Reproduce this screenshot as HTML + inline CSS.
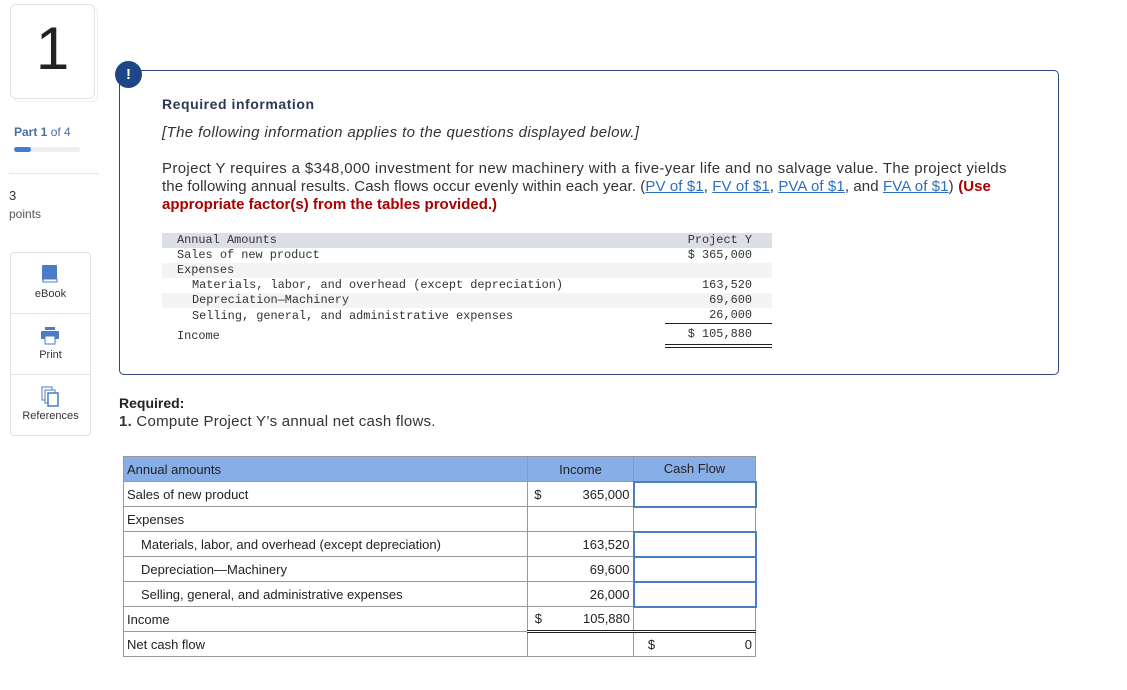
<!DOCTYPE html>
<html><head><meta charset="utf-8"><style>
*{margin:0;padding:0;box-sizing:border-box}
body{width:1127px;height:690px;background:#fff;font-family:"Liberation Sans",sans-serif;color:#333;position:relative;overflow:hidden}
.a{position:absolute;white-space:nowrap}
.card{position:absolute;left:10px;top:4px;width:85px;height:95px;border:1px solid #e2e2e2;border-radius:6px;background:#fff}
.mono{font-family:"Liberation Mono",monospace;font-size:11.9px;color:#333}
.it{position:absolute;left:162px;width:610px;height:15px}
a{color:#2c6ebf;text-decoration:underline}
table{border-collapse:collapse;position:absolute;left:123px;top:456px;font-family:"Liberation Sans Narrow","Liberation Sans",sans-serif;font-size:13px;color:#222}
td{border:1px solid #999;height:25px;padding:0 3px;vertical-align:middle}
.in{border:2px solid #4a7fc0}
</style></head><body>
<div class="card" style="left:13px;top:7px;border-color:#eee"></div>
<div class="card"></div>
<div class="a" style="left:10px;top:14px;width:85px;text-align:center;font-size:60px;color:#222;line-height:70px">1</div>
<div class="a" style="left:14px;top:125px;font-size:12px;color:#4a6fa5"><b>Part 1</b> of 4</div>
<div class="a" style="left:14px;top:147px;width:66px;height:5px;background:#eee;border-radius:3px"></div>
<div class="a" style="left:14px;top:147px;width:17px;height:5px;background:#3f7fd1;border-radius:3px"></div>
<div class="a" style="left:9px;top:173px;width:90px;height:1px;background:#e6e6e6"></div>
<div class="a" style="left:9px;top:188px;font-size:13px;color:#333">3</div>
<div class="a" style="left:9px;top:207px;font-size:12px;color:#555">points</div>
<div class="a" style="left:10px;top:252px;width:81px;height:184px;border:1px solid #e2e2e2;border-radius:4px"></div>
<div class="a" style="left:10px;top:313px;width:81px;height:1px;background:#e2e2e2"></div>
<div class="a" style="left:10px;top:374px;width:81px;height:1px;background:#e2e2e2"></div>
<svg class="a" style="left:40px;top:264px" width="20" height="20"><rect x="2" y="1" width="15" height="16" rx="1" fill="#4a7cc7"/><rect x="3" y="15" width="14" height="3" fill="#fff" stroke="#4a7cc7"/></svg>
<div class="a" style="left:10px;top:288px;width:81px;text-align:center;font-size:11px">eBook</div>
<svg class="a" style="left:40px;top:326px" width="20" height="20"><rect x="5" y="1" width="10" height="3" fill="#4a7cc7"/><rect x="1" y="5" width="18" height="8" rx="1" fill="#4a7cc7"/><rect x="5" y="10" width="10" height="8" fill="#fff" stroke="#4a7cc7"/></svg>
<div class="a" style="left:10px;top:349px;width:81px;text-align:center;font-size:11px">Print</div>
<svg class="a" style="left:40px;top:386px" width="20" height="22"><rect x="2" y="1" width="10" height="13" fill="#fff" stroke="#4a7cc7"/><rect x="5" y="4" width="10" height="13" fill="#fff" stroke="#4a7cc7"/><rect x="8" y="7" width="10" height="13" fill="#fff" stroke="#4a7cc7" stroke-width="1.5"/></svg>
<div class="a" style="left:10px;top:410px;width:81px;text-align:center;font-size:11px">References</div>

<div class="a" style="left:119px;top:70px;width:940px;height:305px;border:1px solid #2c4a7a;border-radius:5px"></div>
<div class="a" style="left:115px;top:61px;width:27px;height:27px;border-radius:50%;background:#1f4587;color:#fff;text-align:center;font-weight:bold;font-size:15px;line-height:27px">!</div>
<div class="a" style="left:162px;top:96px;font-size:14px;font-weight:bold;color:#2b3a55;letter-spacing:0.55px">Required information</div>
<div class="a" style="left:162px;top:124px;font-size:15px;font-style:italic;color:#333;letter-spacing:0.38px">[The following information applies to the questions displayed below.]</div>
<div class="a" style="left:162px;top:160px;font-size:15px;line-height:18px;color:#333;letter-spacing:0.36px">Project Y requires a $348,000 investment for new machinery with a five-year life and no salvage value. The project yields<br><span style="letter-spacing:0.1px">the following annual results. Cash flows occur evenly within each year. (<a>PV of $1</a>, <a>FV of $1</a>, <a>PVA of $1</a>, and <a>FVA of $1</a>)</span> <b style="color:#a00;letter-spacing:0">(Use</b><br><b style="color:#a00;letter-spacing:0">appropriate factor(s) from the tables provided.)</b></div>

<div class="it" style="top:233px;background:#dcdfe6"></div>
<div class="it" style="top:263px;background:#f4f4f4"></div>
<div class="it" style="top:293px;background:#f4f4f4"></div>
<div class="a mono" style="left:177px;top:233px">Annual Amounts</div>
<div class="a mono" style="left:177px;top:248px">Sales of new product</div>
<div class="a mono" style="left:177px;top:263px">Expenses</div>
<div class="a mono" style="left:192px;top:278px">Materials, labor, and overhead (except depreciation)</div>
<div class="a mono" style="left:192px;top:293px">Depreciation—Machinery</div>
<div class="a mono" style="left:192px;top:309px">Selling, general, and administrative expenses</div>
<div class="a mono" style="left:177px;top:329px">Income</div>
<div class="a mono" style="left:600px;width:152px;top:233px;text-align:right;line-height:15px">Project Y<br>$ 365,000<br>&nbsp;<br>163,520<br>69,600<br>26,000</div>
<div class="a" style="left:665px;top:323px;width:107px;height:1px;background:#222"></div>
<div class="a mono" style="left:600px;width:152px;top:327px;text-align:right">$ 105,880</div>
<div class="a" style="left:665px;top:344px;width:107px;height:4px;border-top:1px solid #222;border-bottom:1px solid #222"></div>

<div class="a" style="left:119px;top:395px;font-size:14px;font-weight:bold;color:#222">Required:</div>
<div class="a" style="left:119px;top:413px;font-size:15px;color:#333;letter-spacing:0.25px"><b>1.</b> Compute Project Y’s annual net cash flows.</div>

<table>
<tr style="background:#87aee6"><td style="width:404px">Annual amounts</td><td style="width:106px;text-align:center">Income</td><td style="width:122px;text-align:center">Cash Flow</td></tr>
<tr><td>Sales of new product</td><td style="text-align:right">$<span style="display:inline-block;width:88px">365,000</span></td><td class="in"></td></tr>
<tr><td>Expenses</td><td></td><td></td></tr>
<tr><td style="padding-left:17px">Materials, labor, and overhead (except depreciation)</td><td style="text-align:right">163,520</td><td class="in"></td></tr>
<tr><td style="padding-left:17px">Depreciation—Machinery</td><td style="text-align:right">69,600</td><td class="in"></td></tr>
<tr><td style="padding-left:17px">Selling, general, and administrative expenses</td><td style="text-align:right">26,000</td><td class="in"></td></tr>
<tr><td>Income</td><td style="text-align:right;border-bottom:3px double #222">$<span style="display:inline-block;width:88px">105,880</span></td><td></td></tr>
<tr><td>Net cash flow</td><td></td><td style="border-top:3px double #222">&nbsp;&nbsp;&nbsp;$<span style="float:right">0</span></td></tr>
</table>
</body></html>
